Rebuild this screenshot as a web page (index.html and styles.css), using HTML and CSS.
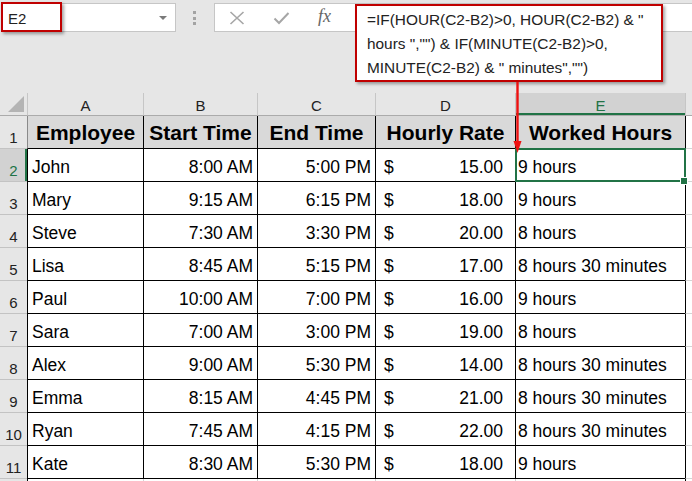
FILE: index.html
```html
<!DOCTYPE html>
<html>
<head>
<meta charset="utf-8">
<link rel="stylesheet" href="styles.css">
</head>
<body>
<div class="app">
  <header class="toolbar">
    <div class="namebox"><span class="name">E2</span><span class="caret"></span></div>
    <div class="grip"><i></i><i></i><i></i></div>
    <div class="fbar">
      <svg class="ico" width="16" height="14" viewBox="0 0 16 14"><path d="M1.5 1 L14.5 13 M14.5 1 L1.5 13" stroke="#a6a6a6" stroke-width="1.6" fill="none"/></svg>
      <svg class="ico" width="17" height="14" viewBox="0 0 17 14"><path d="M1.5 7.5 L6 12 L15.5 2" stroke="#a6a6a6" stroke-width="2" fill="none"/></svg>
      <span class="fx">fx</span>
    </div>
  </header>

  <div class="sheet">
    <div class="corner"><span class="tri"></span></div>
    <div class="ch">A</div><div class="ch">B</div><div class="ch">C</div><div class="ch">D</div><div class="ch selcol">E</div><div class="ch"></div>

    <div class="rh">1</div>
    <div class="c hd first">Employee</div><div class="c hd">Start Time</div><div class="c hd">End Time</div><div class="c hd">Hourly Rate</div><div class="c hd">Worked Hours</div><div class="f"></div>

    <div class="rh selrow">2</div>
    <div class="c">John</div><div class="c r">8:00 AM</div><div class="c r">5:00 PM</div><div class="c acc"><span>$</span><span>15.00</span></div><div class="c e sel">9 hours</div><div class="f"></div>

    <div class="rh">3</div>
    <div class="c">Mary</div><div class="c r">9:15 AM</div><div class="c r">6:15 PM</div><div class="c acc"><span>$</span><span>18.00</span></div><div class="c e">9 hours</div><div class="f"></div>

    <div class="rh">4</div>
    <div class="c">Steve</div><div class="c r">7:30 AM</div><div class="c r">3:30 PM</div><div class="c acc"><span>$</span><span>20.00</span></div><div class="c e">8 hours</div><div class="f"></div>

    <div class="rh">5</div>
    <div class="c">Lisa</div><div class="c r">8:45 AM</div><div class="c r">5:15 PM</div><div class="c acc"><span>$</span><span>17.00</span></div><div class="c e">8 hours 30 minutes</div><div class="f"></div>

    <div class="rh">6</div>
    <div class="c">Paul</div><div class="c r">10:00 AM</div><div class="c r">7:00 PM</div><div class="c acc"><span>$</span><span>16.00</span></div><div class="c e">9 hours</div><div class="f"></div>

    <div class="rh">7</div>
    <div class="c">Sara</div><div class="c r">7:00 AM</div><div class="c r">3:00 PM</div><div class="c acc"><span>$</span><span>19.00</span></div><div class="c e">8 hours</div><div class="f"></div>

    <div class="rh">8</div>
    <div class="c">Alex</div><div class="c r">9:00 AM</div><div class="c r">5:30 PM</div><div class="c acc"><span>$</span><span>14.00</span></div><div class="c e">8 hours 30 minutes</div><div class="f"></div>

    <div class="rh">9</div>
    <div class="c">Emma</div><div class="c r">8:15 AM</div><div class="c r">4:45 PM</div><div class="c acc"><span>$</span><span>21.00</span></div><div class="c e">8 hours 30 minutes</div><div class="f"></div>

    <div class="rh">10</div>
    <div class="c">Ryan</div><div class="c r">7:45 AM</div><div class="c r">4:15 PM</div><div class="c acc"><span>$</span><span>22.00</span></div><div class="c e">8 hours 30 minutes</div><div class="f"></div>

    <div class="rh">11</div>
    <div class="c">Kate</div><div class="c r">8:30 AM</div><div class="c r">5:30 PM</div><div class="c acc"><span>$</span><span>18.00</span></div><div class="c e">9 hours</div><div class="f"></div>

    <div class="rh"></div>
    <div class="g first"></div><div class="g"></div><div class="g"></div><div class="g"></div><div class="g"></div><div class="f"></div>
  </div>

  <div class="namehl"></div>
  <div class="callout">=IF(HOUR(C2-B2)&gt;0, HOUR(C2-B2) &amp; "<br>hours ","") &amp; IF(MINUTE(C2-B2)&gt;0,<br>MINUTE(C2-B2) &amp; " minutes","")</div>
  <svg class="connector" width="16" height="76" viewBox="0 0 16 76">
    <line x1="7.5" y1="1" x2="7.5" y2="62" stroke="#ee1111" stroke-width="2.4"/>
    <polygon points="3.5,60 11.5,60 7.5,72" fill="#ee1111"/>
  </svg>
</div>
</body>
</html>
```

FILE: styles.css
```css
html, body {
  margin: 0;
  padding: 0;
}
body {
  background: #e6e6e6;
  font-family: "Liberation Sans", Arial, sans-serif;
}
.app {
  position: relative;
  width: 692px;
  height: 481px;
  overflow: hidden;
  background: #e6e6e6;
}

/* toolbar */
.toolbar {
  height: 93px;
  box-sizing: border-box;
  padding: 3px 0 0 2px;
  display: flex;
  align-items: flex-start;
}
.namebox {
  width: 174px;
  height: 29px;
  box-sizing: border-box;
  background: #fff;
  border: 1px solid #c6c6c6;
  display: flex;
  align-items: center;
  justify-content: space-between;
  padding: 0 8px 0 5px;
}
.name {
  font-size: 15px;
  color: #222;
  padding-top: 1px;
}
.caret {
  width: 0;
  height: 0;
  border-left: 4px solid transparent;
  border-right: 4px solid transparent;
  border-top: 4px solid #7a7a7a;
}
.grip {
  margin-left: 17px;
  width: 4px;
  padding-top: 8px;
  display: flex;
  flex-direction: column;
  gap: 2.5px;
}
.grip i {
  display: block;
  width: 3px;
  height: 3px;
  background: #a3a3a3;
}
.fbar {
  margin-left: 17px;
  flex: 1;
  height: 29px;
  box-sizing: border-box;
  background: #fff;
  border: 1px solid #c6c6c6;
  border-right: none;
  display: flex;
  align-items: center;
  padding-left: 14px;
  gap: 28px;
}
.ico {
  display: block;
}
.fx {
  font-family: "Liberation Serif", "DejaVu Serif", serif;
  font-style: italic;
  font-size: 18px;
  color: #666;
  padding-bottom: 2px;
}

/* sheet grid */
.sheet {
  display: grid;
  grid-template-columns: 27px 116px 114px 118px 140px 170px 1fr;
  grid-template-rows: 23px repeat(12, 33px);
}
.corner {
  background: #e6e6e6;
  border-bottom: 1px solid #ababab;
  position: relative;
}
.tri {
  position: absolute;
  right: 3px;
  bottom: 3px;
  width: 0;
  height: 0;
  border-left: 16px solid transparent;
  border-bottom: 16px solid #b4b4b4;
}
.ch {
  background: #e6e6e6;
  border-left: 1px solid #c6c6c6;
  border-bottom: 1px solid #ababab;
  display: flex;
  align-items: flex-end;
  justify-content: center;
  font-size: 15px;
  line-height: 18px;
  color: #222;
}
.ch.selcol {
  background: #d2d2d2;
  color: #217346;
  box-shadow: inset 0 -2px 0 #217346;
}
.rh {
  background: #e6e6e6;
  border-bottom: 1px solid #c3c3c3;
  display: flex;
  align-items: flex-end;
  justify-content: center;
  padding-bottom: 1px;
  font-size: 15px;
  line-height: 18px;
  color: #222;
}
.rh.selrow {
  background: #d2d2d2;
  color: #217346;
  box-shadow: inset -2px 0 0 #217346;
}
.c {
  background: #fff;
  border-left: 1px solid #000;
  border-bottom: 1px solid #000;
  display: flex;
  align-items: flex-end;
  padding: 0 4px 4px 4px;
  font-size: 17.5px;
  line-height: 20px;
  color: #000;
  white-space: nowrap;
}
.c.r {
  justify-content: flex-end;
}
.c.acc {
  justify-content: space-between;
  padding-left: 8px;
  padding-right: 12px;
}
.c.e {
  padding-left: 2px;
}
.c.hd {
  background: #d9d9d9;
  font-weight: bold;
  font-size: 21px;
  line-height: 24px;
  justify-content: center;
  padding: 0 0 3px 0;
}
.c.hd.first {
  border-left-color: #8a8a8a;
}
.c.sel {
  position: relative;
}
.c.sel::after {
  content: "";
  position: absolute;
  left: -1px;
  top: -1px;
  right: -1px;
  bottom: -1px;
  border: 2px solid #217346;
  z-index: 2;
}
.c.sel::before {
  content: "";
  position: absolute;
  right: -3px;
  bottom: -4px;
  width: 6px;
  height: 6px;
  background: #217346;
  border: 1px solid #fff;
  z-index: 3;
}
.f {
  background: #fff;
  border-left: 1px solid #000;
  border-bottom: 1px solid #d4d4d4;
}
.g {
  background: #fff;
  border-left: 1px solid #d4d4d4;
}
.g.first {
  border-left-color: #000;
}

/* overlays */
.namehl {
  position: absolute;
  left: 1px;
  top: 2px;
  width: 61px;
  height: 30px;
  box-sizing: border-box;
  border: 2px solid #c00000;
  box-shadow: 2px 2px 3px rgba(0, 0, 0, 0.35);
}
.callout {
  position: absolute;
  left: 355px;
  top: 4px;
  width: 308px;
  height: 78px;
  box-sizing: border-box;
  border: 2px solid #c00000;
  background: #fff;
  box-shadow: 2px 2px 3px rgba(0, 0, 0, 0.35);
  padding: 2px 0 0 10px;
  font-size: 15.4px;
  line-height: 24px;
  color: #222;
  white-space: nowrap;
}
.connector {
  position: absolute;
  left: 509.5px;
  top: 81px;
  z-index: 5;
}
```
